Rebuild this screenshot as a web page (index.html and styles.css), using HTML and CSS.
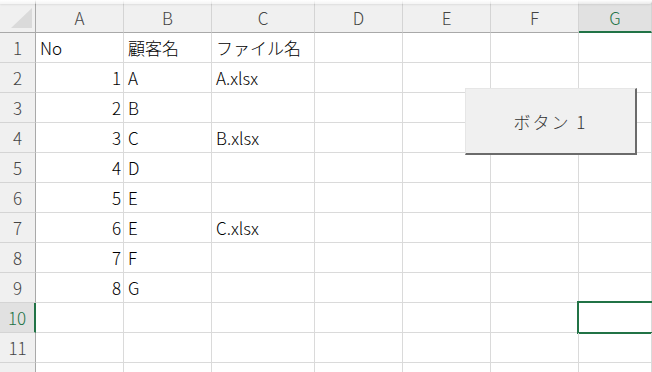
FILE: index.html
```html
<!DOCTYPE html>
<html lang="ja">
<head>
    <meta charset="UTF-8">
    <title>Book1 - Excel</title>
    <link rel="stylesheet" href="styles.css">
</head>
<body>
    <div class="sheet">
        <div class="corner"><span class="corner-mark"></span></div>
        <div class="col-head">A</div>
        <div class="col-head">B</div>
        <div class="col-head">C</div>
        <div class="col-head">D</div>
        <div class="col-head">E</div>
        <div class="col-head">F</div>
        <div class="col-head active">G</div>

        <div class="row-head">1</div>
        <div class="cell">No</div><div class="cell">顧客名</div><div class="cell">ファイル名</div>
        <div class="cell"></div><div class="cell"></div><div class="cell"></div><div class="cell"></div>

        <div class="row-head">2</div>
        <div class="cell num">1</div><div class="cell">A</div><div class="cell">A.xlsx</div>
        <div class="cell"></div><div class="cell"></div><div class="cell"></div><div class="cell"></div>

        <div class="row-head">3</div>
        <div class="cell num">2</div><div class="cell">B</div><div class="cell"></div>
        <div class="cell"></div><div class="cell"></div><div class="cell"></div><div class="cell"></div>

        <div class="row-head">4</div>
        <div class="cell num">3</div><div class="cell">C</div><div class="cell">B.xlsx</div>
        <div class="cell"></div><div class="cell"></div><div class="cell"></div><div class="cell"></div>

        <div class="row-head">5</div>
        <div class="cell num">4</div><div class="cell">D</div><div class="cell"></div>
        <div class="cell"></div><div class="cell"></div><div class="cell"></div><div class="cell"></div>

        <div class="row-head">6</div>
        <div class="cell num">5</div><div class="cell">E</div><div class="cell"></div>
        <div class="cell"></div><div class="cell"></div><div class="cell"></div><div class="cell"></div>

        <div class="row-head">7</div>
        <div class="cell num">6</div><div class="cell">E</div><div class="cell">C.xlsx</div>
        <div class="cell"></div><div class="cell"></div><div class="cell"></div><div class="cell"></div>

        <div class="row-head">8</div>
        <div class="cell num">7</div><div class="cell">F</div><div class="cell"></div>
        <div class="cell"></div><div class="cell"></div><div class="cell"></div><div class="cell"></div>

        <div class="row-head">9</div>
        <div class="cell num">8</div><div class="cell">G</div><div class="cell"></div>
        <div class="cell"></div><div class="cell"></div><div class="cell"></div><div class="cell"></div>

        <div class="row-head active">10</div>
        <div class="cell"></div><div class="cell"></div><div class="cell"></div>
        <div class="cell"></div><div class="cell"></div><div class="cell"></div><div class="cell selected"></div>

        <div class="row-head">11</div>
        <div class="cell"></div><div class="cell"></div><div class="cell"></div>
        <div class="cell"></div><div class="cell"></div><div class="cell"></div><div class="cell"></div>

        <div class="row-head">12</div>
        <div class="cell"></div><div class="cell"></div><div class="cell"></div>
        <div class="cell"></div><div class="cell"></div><div class="cell"></div><div class="cell"></div>

        <button class="form-btn">ボタン 1</button>
    </div>
</body>
</html>
```

FILE: styles.css
```css
body {
    margin: 0;
    background: #ffffff;
    font-family: "Noto Sans CJK JP", "Noto Sans", sans-serif;
    font-weight: 300;
    color: #000;
    overflow: hidden;
}

.sheet {
    position: relative;
    display: grid;
    grid-template-columns: 36px 88px 88px 103px 88px 88px 88px 1fr;
    grid-template-rows: 33px repeat(12, 30px);
    width: 652px;
}

/* formula bar edge above the headers */
.sheet::before {
    content: "";
    position: absolute;
    top: 0;
    left: 0;
    right: 0;
    height: 4px;
    background: linear-gradient(#ffffff, rgba(255,255,255,0.3));
    box-shadow: 0 1px 2px rgba(0,0,0,0.08);
    border-bottom-right-radius: 3px;
    z-index: 2;
}

.corner {
    position: relative;
    background: #f0f0f0;
    border-right: 1px solid #a9a9a9;
    border-bottom: 1px solid #a9a9a9;
}

.corner-mark {
    position: absolute;
    right: 3px;
    bottom: 4px;
    width: 0;
    height: 0;
    border-left: 21px solid transparent;
    border-bottom: 20px solid #dadada;
}

.col-head {
    display: flex;
    align-items: center;
    justify-content: center;
    padding-top: 3px;
    background: #f0f0f0;
    border-right: 1px solid #d4d4d4;
    border-bottom: 1px solid #a9a9a9;
    font-size: 17px;
    color: #444;
}

.col-head.active {
    background: #e1e1e1;
    color: #217346;
    border-bottom: 2px solid #217346;
}

.row-head {
    display: flex;
    align-items: center;
    justify-content: center;
    background: #f0f0f0;
    border-right: 1px solid #a9a9a9;
    border-bottom: 1px solid #d4d4d4;
    font-size: 17px;
    color: #444;
}

.row-head.active {
    background: #e1e1e1;
    color: #217346;
    border-right: 2px solid #217346;
}

.cell {
    position: relative;
    display: flex;
    align-items: center;
    padding: 0 4px;
    border-right: 1px solid #dadada;
    border-bottom: 1px solid #dadada;
    font-size: 17px;
    line-height: 1;
    white-space: nowrap;
}

.cell.num {
    justify-content: flex-end;
    padding-right: 2px;
}

.cell.selected::after {
    content: "";
    position: absolute;
    top: -2px;
    left: -2px;
    right: -4px;
    bottom: -2px;
    border: 2px solid #217346;
}

.form-btn {
    position: absolute;
    left: 465px;
    top: 88px;
    width: 172px;
    height: 67px;
    padding: 0;
    background: #f0f0f0;
    border-top: 1px solid #e6e6e6;
    border-left: 1px solid #e6e6e6;
    border-right: 2px solid #6b6b6b;
    border-bottom: 2px solid #6b6b6b;
    font-family: "Noto Sans CJK JP", sans-serif;
    font-weight: 300;
    font-size: 17px;
    letter-spacing: 2px;
    color: #333;
}
```
